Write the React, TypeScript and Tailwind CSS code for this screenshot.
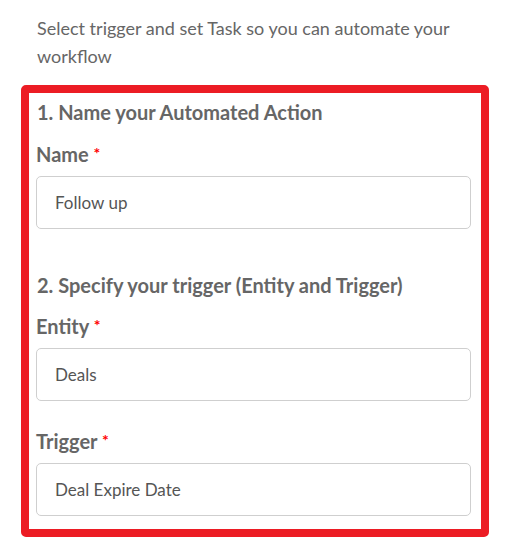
import React from 'react';

const font = { fontFamily: 'Lato, "Noto Sans", sans-serif' };

function Field({ label, value, className }: { label: string; value: string; className?: string }) {
  return (
    <div className={className}>
      <label className="block h-6 text-[20px] leading-6 font-bold text-[#666]">
        {label} <span className="relative -top-[3px] text-[16px] text-[#f00]">*</span>
      </label>
      <div className="mt-[10px] flex h-[53px] items-center rounded-[5px] border border-[#cfcfcf] bg-white pl-[18px] text-[17px] text-[#555]">
        {value}
      </div>
    </div>
  );
}

export default function App() {
  return (
    <div className="h-[548px] w-[510px] bg-white" style={font}>
      <div className="pt-[14px]">
        <p className="pl-[37px] pr-[50px] text-[18px] leading-[28px] text-[#666]">
          Select trigger and set Task so you can automate your workflow
        </p>
        <div className="mx-[21px] mt-[15px] rounded-[5px] border-[8px] border-[#ec1c24] pl-[7px] pr-[10px] pt-[7px] pb-[13px]">
          <h2 className="pl-px text-[20px] leading-6 font-bold text-[#666]">1. Name your Automated Action</h2>
          <Field label="Name" value="Follow up" className="mt-[18px]" />
          <h2 className="mt-[44px] pl-px text-[20px] leading-6 font-bold text-[#666]">
            2. Specify your trigger (Entity and Trigger)
          </h2>
          <Field label="Entity" value="Deals" className="mt-[17px]" />
          <Field label="Trigger" value="Deal Expire Date" className="mt-[28px]" />
        </div>
      </div>
    </div>
  );
}
